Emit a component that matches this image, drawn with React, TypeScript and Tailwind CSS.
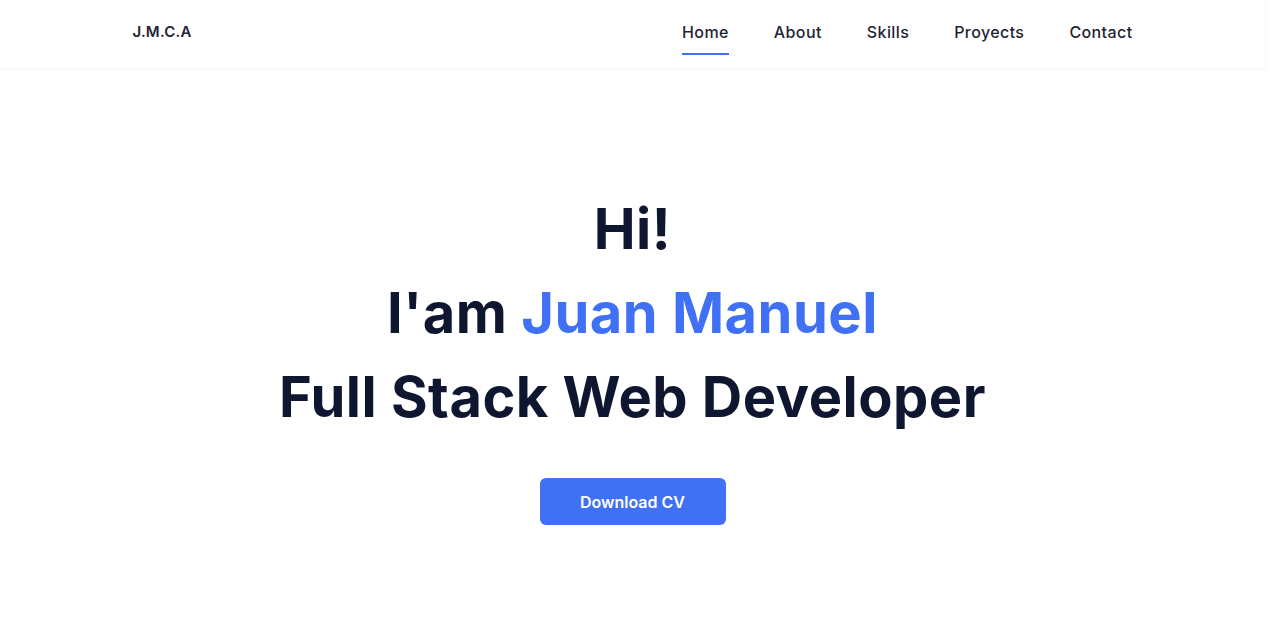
import React from 'react';

const links = ['Home', 'About', 'Skills', 'Proyects', 'Contact'];

function Header() {
  return (
    <header className="sticky top-0 z-10 bg-white shadow-[0_1px_4px_rgba(0,0,0,0.06)]">
      <nav className="max-w-[1000px] mx-auto h-[68px] pb-[4px] flex items-center justify-between">
        <a href="#" className="text-[15px] font-semibold tracking-[0.2px] text-[#1f2433]">J.M.C.A</a>
        <ul className="flex items-center gap-[45px]">
          {links.map((link, i) => (
            <li key={link} className="relative">
              <a href={`#${link.toLowerCase()}`} className="text-[16px] font-medium tracking-[0.4px] text-[#1f2433]">
                {link}
              </a>
              {i === 0 && <span className="absolute left-0 right-0 top-[33px] h-[2px] bg-[#4070f4]" />}
            </li>
          ))}
        </ul>
      </nav>
    </header>
  );
}

function App() {
  return (
    // pr-[15px] keeps the layout width the same as the page with its scrollbar
    <div className="min-h-screen bg-white pr-[15px] font-['Inter',sans-serif] text-[#0e1630]">
      <Header />

      <section id="home" className="h-[calc(100vh-68px)] flex flex-col items-center pt-[119px]">
        <h1 className="text-center text-[56px] leading-[84px] font-bold tracking-[0.5px]">
          <span className="block">Hi!</span>
          <span className="block">
            I'am <span className="text-[#4070f4]">Juan Manuel</span>
          </span>
          <span className="block">Full Stack Web Developer</span>
        </h1>
        <button className="mt-[39px] w-[186px] h-[47px] rounded-md bg-[#4070f4] text-white text-[16px] font-semibold">
          Download CV
        </button>
      </section>
    </div>
  );
}

export default App;
